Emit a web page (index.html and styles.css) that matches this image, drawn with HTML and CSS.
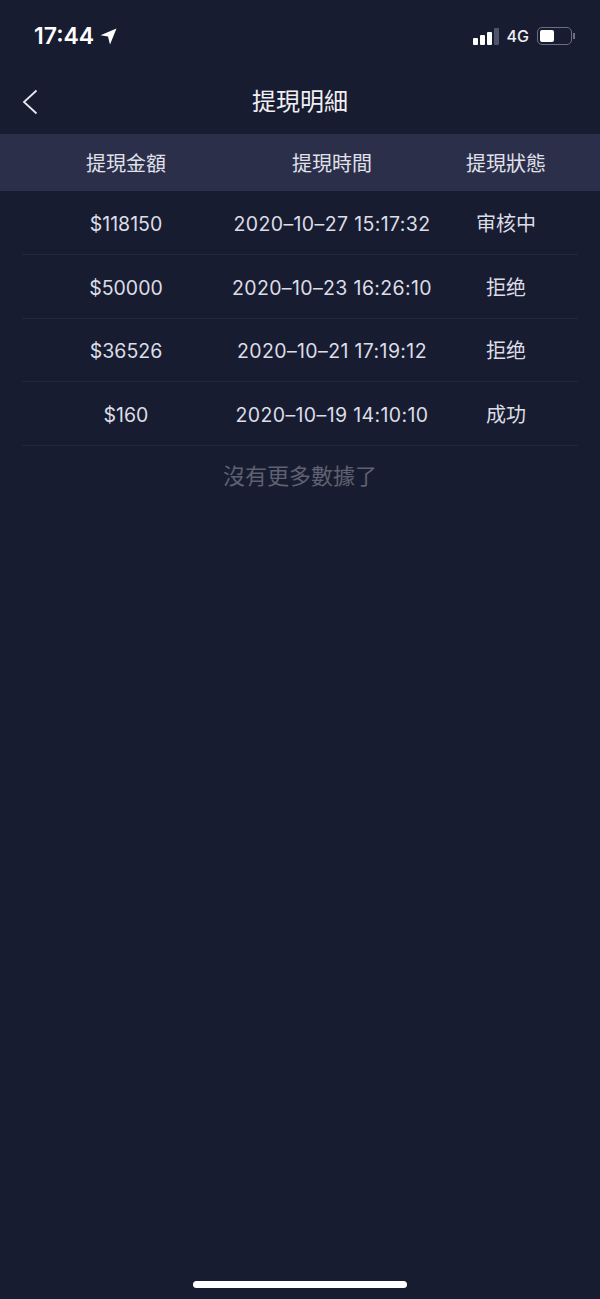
FILE: index.html
```html
<!DOCTYPE html>
<html lang="zh-Hant">

<head>
    <meta charset="UTF-8">
    <meta name="viewport" content="width=device-width, initial-scale=1.0">
    <title>提現明細</title>
    <link rel="stylesheet" href="styles.css">
</head>

<body>
    <div class="page">
        <div class="status-bar">
            <div class="status-left">
                <span class="clock">17:44</span>
                <svg class="location" width="17" height="17" viewBox="0 0 17 17">
                    <path d="M16.5 0.5 L0.5 7.2 L8 8.6 L10 16.5 Z" fill="#fff" />
                </svg>
            </div>
            <div class="status-right">
                <div class="signal">
                    <span class="bar bar-1"></span>
                    <span class="bar bar-2"></span>
                    <span class="bar bar-3"></span>
                    <span class="bar bar-4"></span>
                </div>
                <span class="network">4G</span>
                <div class="battery">
                    <span class="battery-level"></span>
                </div>
                <span class="battery-cap"></span>
            </div>
        </div>

        <div class="nav">
            <svg class="back" width="18" height="28" viewBox="0 0 18 28">
                <path d="M15.5 2.5 L3 14 L15.5 25.5" fill="none" stroke="#e8e9ee" stroke-width="1.8" />
            </svg>
            <h1 class="title">提現明細</h1>
        </div>

        <div class="table-head">
            <span>提現金額</span>
            <span>提現時間</span>
            <span>提現狀態</span>
        </div>

        <div class="table-body">
            <div class="row">
                <span class="num">$118150</span>
                <span class="num date">2020–10–27 15:17:32</span>
                <span>审核中</span>
            </div>
            <div class="row">
                <span class="num">$50000</span>
                <span class="num date">2020–10–23 16:26:10</span>
                <span>拒绝</span>
            </div>
            <div class="row">
                <span class="num">$36526</span>
                <span class="num date">2020–10–21 17:19:12</span>
                <span>拒绝</span>
            </div>
            <div class="row">
                <span class="num">$160</span>
                <span class="num date">2020–10–19 14:10:10</span>
                <span>成功</span>
            </div>
        </div>

        <p class="no-more">沒有更多數據了</p>

        <div class="home-bar"></div>
    </div>
</body>

</html>
```

FILE: styles.css
```css
* {
    box-sizing: border-box;
}

body {
    font-family: Inter, "Noto Sans CJK TC", sans-serif;
    background-color: #181c30;
    color: #e4e5ec;
    margin: 0;
}

.page {
    display: flex;
    flex-direction: column;
    height: 1299px;
    overflow: hidden;
}

.status-bar {
    display: flex;
    justify-content: space-between;
    align-items: center;
    height: 72px;
    padding: 0 25px 0 34px;
}

.status-left {
    display: flex;
    align-items: center;
    gap: 6px;
}

.clock {
    font-size: 23px;
    font-weight: 600;
    color: #fff;
}

.status-right {
    display: flex;
    align-items: center;
}

.signal {
    display: flex;
    align-items: flex-end;
    gap: 2px;
    height: 17px;
    margin-right: 8px;
}

.bar {
    width: 5px;
    background-color: #fff;
    border-radius: 1px;
}

.bar-1 {
    height: 7px;
}

.bar-2 {
    height: 10px;
}

.bar-3 {
    height: 13px;
}

.bar-4 {
    height: 17px;
    background-color: #50546a;
}

.network {
    font-size: 16px;
    font-weight: 500;
    color: #f0f0f4;
    margin-right: 8px;
}

.battery {
    width: 35px;
    height: 18px;
    padding: 2px;
    border: 1.5px solid #6c6f80;
    border-radius: 5px;
}

.battery-level {
    display: block;
    width: 14px;
    height: 100%;
    background-color: #fff;
    border-radius: 2px;
}

.battery-cap {
    width: 2px;
    height: 6px;
    margin-left: 1px;
    background-color: #6c6f7e;
}

.nav {
    display: flex;
    justify-content: center;
    align-items: center;
    position: relative;
    height: 62px;
    padding-bottom: 8px;
}

.back {
    position: absolute;
    left: 21px;
    top: 16px;
}

.title {
    font-size: 24px;
    font-weight: 400;
    margin: 0;
    color: #f0f0f4;
}

.table-head,
.row {
    display: grid;
    grid-template-columns: 208px 204px 144px;
    text-align: center;
    align-items: center;
}

.table-head {
    height: 57px;
    padding: 0 22px;
    background-color: #2b2f4a;
    font-size: 20px;
    color: #e0e1ea;
}

.table-body {
    padding: 0 22px;
}

.row {
    height: 63.75px;
    border-bottom: 1px solid #222740;
    font-size: 20px;
    color: #dcdde6;
}

.num {
    padding-top: 3px;
    font-size: 19.5px;
}

.date {
    letter-spacing: 0.37px;
}

.no-more {
    margin: 12px 0 0;
    text-align: center;
    font-size: 22px;
    color: #5e6170;
}

.home-bar {
    width: 214px;
    height: 7px;
    margin: auto auto 11px;
    background-color: #fff;
    border-radius: 4px;
}
```
